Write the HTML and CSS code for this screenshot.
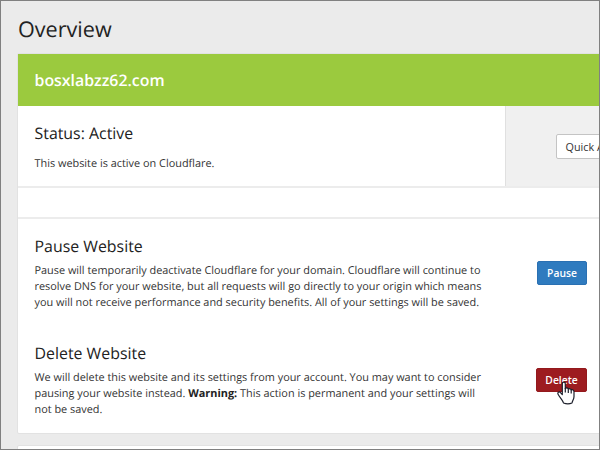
FILE: index.html
```html
<!DOCTYPE html>
<html lang="en">
<head>
<meta charset="utf-8">
<title>Overview</title>
<link rel="stylesheet" href="styles.css">
</head>
<body>
<main class="page">
  <h1 class="title">Overview</h1>
  <section class="card">
    <header class="banner">bosxlabzz62.com</header>
    <div class="status">
      <div class="status-info">
        <h2 class="heading">Status: Active</h2>
        <p class="text">This website is active on Cloudflare.</p>
      </div>
      <div class="status-actions"><button class="quick">Quick Actions</button></div>
    </div>
    <div class="spacer"></div>
    <div class="row">
      <div>
        <h2 class="heading">Pause Website</h2>
        <p class="text">Pause will temporarily deactivate Cloudflare for your domain. Cloudflare will continue to<br>resolve DNS for your website, but all requests will go directly to your origin which means<br>you will not receive performance and security benefits. All of your settings will be saved.</p>
      </div>
      <button class="btn pause">Pause</button>
    </div>
    <div class="row">
      <div>
        <h2 class="heading">Delete Website</h2>
        <p class="text">We will delete this website and its settings from your account. You may want to consider<br>pausing your website instead. <b>Warning:</b> This action is permanent and your settings will<br>not be saved.</p>
      </div>
      <button class="btn delete">Delete
        <svg class="cursor" width="18" height="24" viewBox="0 0 18 24"><path d="M5.3 13.5V2.7C5.3.5 8.3.5 8.3 2.7V7.6C9 6.5 11 6.7 11.3 8.2C12.3 7.3 14 7.8 14.2 9C15.4 8.3 17 9 17 10.7V15.5C17 18.5 15.5 19.4 15 22Q11 23.6 6.5 22C6.1 19.5 3.4 17.2 1.2 13.5C-.1 11.3 2.3 10.2 3.7 11.8Z" fill="#fff" stroke="#1c1f2b" stroke-width="1.2" stroke-linejoin="round"/><path d="M8.3 7V11.5M11.3 8.2V12M14.2 9V12.5" stroke="#1c1f2b" stroke-width="1.2"/></svg>
      </button>
    </div>
  </section>
  <section class="card next"></section>
</main>
</body>
</html>
```
FILE: styles.css
```css
* { box-sizing: border-box; }
body { margin: 0; font-family: "Open Sans", sans-serif; color: #333; text-rendering: geometricPrecision; }
h1, h2, p { margin: 0; font-weight: 400; }
.page { width: 600px; height: 450px; overflow: hidden; background: #ebebeb; border: 1px solid #808080; padding-left: 16px; }
.title { height: 52px; padding: 13px 0 0 1px; font-size: 21.6px; line-height: 32px; color: #222; }
.card { width: 640px; background: #fff; border: 1px solid #e2e2e2; border-radius: 2px; }
.banner { height: 52px; line-height: 52px; padding-left: 16.5px; background: #9bca3e; color: #fff; font-size: 15.9px; font-weight: 600; }
.status { display: flex; height: 82px; border-bottom: 2px solid #ececec; }
.status-info { flex: none; width: 487px; padding: 15px 0 0 16.5px; }
.status-info .text { margin-top: 11px; }
.status-actions { flex: 1; background: #f0f0f0; border-left: 1px solid #e0e0e0; padding: 28px 0 0 50px; }
.heading { font-size: 15.9px; line-height: 24px; color: #222; }
.text { font-size: 10.9px; line-height: 16px; white-space: nowrap; }
.text b { color: #222; }
button { font-family: inherit; font-size: 10.8px; white-space: nowrap; }
.quick { display: block; width: 110px; height: 25px; padding: 0 8.5px; text-align: left; color: #333; background: #fff; border: 1px solid #c4c4c4; border-radius: 2px; }
.spacer { height: 31px; border-bottom: 2px solid #ececec; }
.row { display: flex; height: 107px; padding: 15px 0 0 16.5px; }
.row > div { flex: none; width: 502.5px; }
.row .text { margin-top: 5px; line-height: 16.2px; }
.btn { position: relative; height: 24px; padding: 0; border: 1px solid; border-radius: 2px; color: #fff; font-size: 10.3px; font-weight: 600; }
.pause { width: 50px; margin-top: 27px; background: #2f7bbf; border-color: #2a70b2; }
.delete { width: 51px; margin: 27px 0 0 -1px; background: #9d1c20; border-color: #93191d; }
.cursor { position: absolute; left: 20px; top: 12px; }
.next { margin-top: 11px; height: 30px; }
```
